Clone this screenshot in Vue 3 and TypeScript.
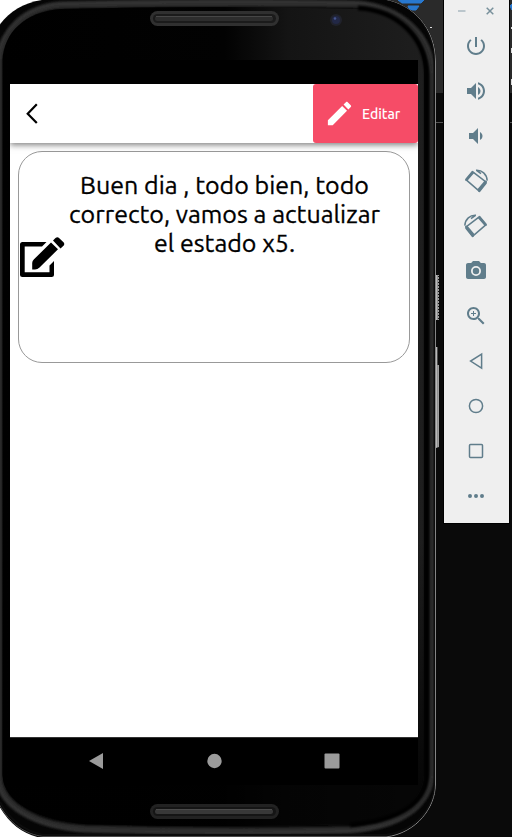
<script setup lang="ts">
interface Tool {
  name: string
  fill?: string
  stroke?: string
}

const statusLines: string[] = ['Buen dia , todo bien, todo', 'correcto, vamos a actualizar', 'el estado x5.']

const tools: Tool[] = [
  { name: 'power', fill: 'M13 3h-2v10h2V3zm4.83 2.17l-1.42 1.42C17.99 7.86 19 9.81 19 12c0 3.87-3.13 7-7 7s-7-3.13-7-7c0-2.19 1.01-4.14 2.58-5.42L6.17 5.17C4.23 6.82 3 9.26 3 12c0 4.97 4.03 9 9 9s9-4.03 9-9c0-2.74-1.23-5.18-3.17-6.83z' },
  { name: 'volume-up', fill: 'M3 9v6h4l5 5V4L7 9H3zm13.5 3c0-1.77-1.02-3.29-2.5-4.03v8.05c1.48-.73 2.5-2.25 2.5-4.02zM14 3.23v2.06c2.89.86 5 3.54 5 6.71s-2.11 5.85-5 6.71v2.06c4.01-.91 7-4.49 7-8.77s-2.99-7.86-7-8.77z' },
  { name: 'volume-down', fill: 'M18.5 12c0-1.77-1.02-3.29-2.5-4.03v8.05c1.48-.73 2.5-2.25 2.5-4.02zM5 9v6h4l5 5V4L9 9H5z' },
  { name: 'rotate-left', fill: 'M8.1 1.7 1.2 9.9v1.600l2 .5 7.200-8.300zM22.800 12.100l-2-.5-7.200 8.500.8 2.700 1.400.5 7-8.900z', stroke: 'M8.800 2.800 21.900 13 15.200 22.100 2.200 10.800ZM12 1.300C18 .9 22.800 5 23.200 11.600M12.500 1.300l4.500 3.300' },
  { name: 'rotate-right', fill: 'M15.900 1.700l6.900 8.200v1.600l-2 .5-7.200-8.300zM1.200 12.100l2-.5 7.200 8.500-.8 2.700-1.400.5-7-8.900z', stroke: 'M15.200 2.800 2.100 13 8.800 22.100 21.800 10.800ZM12 1.300C6 .9 1.200 5 .8 11.600M11.500 1.300 7 4.600' },
  { name: 'camera', fill: 'M12 8.8a3.2 3.2 0 1 0 0 6.4 3.2 3.2 0 0 0 0-6.4zM9 2 7.17 4H4c-1.1 0-2 .9-2 2v12c0 1.1.9 2 2 2h16c1.1 0 2-.9 2-2V6c0-1.1-.9-2-2-2h-3.17L15 2H9zm3 15a5 5 0 1 1 0-10 5 5 0 0 1 0 10z' },
  { name: 'zoom', fill: 'M15.5 14h-.79l-.28-.27C15.41 12.59 16 11.11 16 9.5 16 5.91 13.09 3 9.5 3S3 5.91 3 9.5 5.91 16 9.5 16c1.61 0 3.09-.59 4.23-1.57l.27.28v.79l5 4.99L20.49 19l-4.99-5zm-6 0C7.01 14 5 11.99 5 9.5S7.01 5 9.5 5 14 7.01 14 9.5 11.99 14 9.5 14zm2.5-4h-2v2H9v-2H7V9h2V7h1v2h2v1z' },
  { name: 'nav-back', stroke: 'M17.6 5.2v13.9L6.6 12.1Z' },
  { name: 'nav-home', stroke: 'M18.6 12A6.6 6.6 0 1 1 5.4 12 6.6 6.6 0 0 1 18.6 12' },
  { name: 'nav-overview', stroke: 'M6.5 5.5h11a1 1 0 0 1 1 1v11a1 1 0 0 1-1 1h-11a1 1 0 0 1-1-1v-11a1 1 0 0 1 1-1Z' },
  { name: 'more', fill: 'M8 12a2 2 0 1 1-4 0 2 2 0 0 1 4 0m6 0a2 2 0 1 1-4 0 2 2 0 0 1 4 0m6 0a2 2 0 1 1-4 0 2 2 0 0 1 4 0' },
]
</script>

<template>
  <main class="desktop">
    <svg class="scene" viewBox="0 0 512 837" aria-hidden="true">
      <defs>
        <linearGradient id="bezel" gradientUnits="userSpaceOnUse" x1="0" x2="424" y1="0" y2="0">
          <stop offset="0" stop-color="#000" />
          <stop offset=".53" stop-color="#020202" />
          <stop offset=".68" stop-color="#141414" />
          <stop offset="1" stop-color="#1e1e1e" />
        </linearGradient>
        <linearGradient id="fade" x1="0" x2="0" y1="0" y2="1">
          <stop offset=".65" stop-color="#000" stop-opacity="0" />
          <stop offset=".95" stop-color="#000" stop-opacity=".8" />
        </linearGradient>
        <linearGradient id="key" x1="0" x2="1" y1="0" y2="0">
          <stop offset="0" stop-color="#ddd" />
          <stop offset=".4" stop-color="#888" />
          <stop offset="1" stop-color="#aaa" />
        </linearGradient>
        <filter id="soft" filterUnits="userSpaceOnUse" x="-20" y="-20" width="480" height="880"><feGaussianBlur stdDeviation="1.200" /></filter>
        <clipPath id="phone-clip"><path d="M-2 27C10 10 26 1 50 -1L384 -1C413 4 436 28 436 61L436 785C436 807 417 834 386 838L42 838C24 835 9 824 -2 804Z" /></clipPath>
      </defs>
      <rect width="512" height="837" fill="#0a0a0a" />
      <rect x="390" width="122" height="93" fill="#2a2a2a" />
      <path d="M430 122.5h82" stroke="#555" />
      <path d="M398 0h26l-3 3h-19zM408 6h11l-3 4h-7zM510 6l2-2v6z" fill="#2878cf" stroke="#2878cf" />
      <path d="M430 27.5h2M511.5 27v2M511.5 48v5M511.5 79v6" stroke="#ddd" />
      <path d="M0 0h60v60H0zM0 780h60v57H0z" fill="#fff" />
      <g clip-path="url(#phone-clip)">
        <rect width="437" height="837" fill="#050505" />
        <g filter="url(#soft)">
          <path class="rim rim-wide" d="M-1 60C2 32 24 8 60 5Q218 1 358 4C400 8 431 34 432 75V770C430 806 401 826 350 830Q218 833 85 829C34 826 2 805 -1 780Z" />
          <path class="rim rim-mid" d="M1 60C3 32 25 10 60 7Q218 4 358 6C402 9 431 35 432 75V775C430 807 401 824 350 828Q218 831 85 828C34 824 4 804 1 780Z" />
        </g>
        <path d="M2.500 60C4 32 25 12 60 9Q218 5 358 9C397 12 424 38 424 72V775C423 802 398 819 350 824Q218 828 85 824C35 819 4 802 2.500 775Z" fill="url(#bezel)" />
        <path d="M2.500 60C4 32 25 12 60 9Q218 5 358 9C397 12 424 38 424 72V775C423 802 398 819 350 824Q218 828 85 824C35 819 4 802 2.500 775Z" fill="url(#fade)" />
        <path d="M358 8C398 10 426 38 427 75V775C426 804 399 820 350 825" fill="none" stroke="#000" stroke-width="5" filter="url(#soft)" />
        <path d="M386 -1C414 4 434 30 434.500 61V785C434 809 415 831 386 835H43C25 831 10 821 0 802" fill="none" stroke="#0c0c0c" stroke-width="2" />
        <path d="M384 -1C413 4 435.500 28 435.500 61V785C435.500 807 417 833 386 837" fill="none" stroke="#858585" stroke-width="1" />
        <path d="M-1 804C10 824 25 834 43 836.500H386" fill="none" stroke="#4a4a4a" stroke-width="1" />
      </g>
      <rect x="436" y="275" width="3" height="45" fill="url(#key)" />
      <path d="M438.500 276v43" stroke="#111" stroke-dasharray="1 2" />
      <path d="M436 347h1.500v18h1.500v82l-3 1z" fill="url(#key)" />
      <g>
        <rect x="150" y="11" width="129" height="15" rx="7.500" fill="#303030" />
        <rect x="153" y="14" width="123" height="9" rx="4.500" fill="#1b1b1b" />
        <rect x="155" y="16" width="118" height="5" rx="2.500" fill="#2d2d2d" />
        <path d="M156 16.500h116" stroke="#464646" />
        <rect x="150" y="804" width="129" height="15" rx="7.500" fill="#222" />
        <rect x="153" y="807" width="123" height="9" rx="4.500" fill="#151515" />
        <rect x="155" y="809" width="118" height="5" rx="2.500" fill="#383838" />
        <path d="M156 809.500h116" stroke="#4a4a4a" />
      </g>
      <circle cx="336" cy="20" r="6" fill="#20222b" />
      <circle cx="336" cy="20" r="4" fill="#222846" />
      <circle cx="335" cy="18.500" r="1.300" fill="#46558f" />
    </svg>

    <section class="screen">
      <div class="status-bar"></div>
      <div class="app">
        <header class="app-bar">
          <button class="back" aria-label="Volver">
            <svg viewBox="0 0 12 22"><path d="M10.800 1.300 1.700 10.700l9.100 9.300" /></svg>
          </button>
          <button class="edit">
            <svg viewBox="0 0 24 24"><path d="M3 17.250V21h3.750L17.810 9.940l-3.750-3.750L3 17.250zM20.710 7.040c.39-.39.39-1.020 0-1.410l-2.340-2.340c-.39-.39-1.020-.39-1.410 0l-1.830 1.830 3.750 3.750 1.830-1.830z" /></svg>
            <span>Editar</span>
          </button>
        </header>
        <article class="card">
          <svg class="compose" viewBox="0 0 46 41">
            <path d="M27.500 5 23 9.500H5.700V35.300H30.500V28.500L35 24V37.500Q35 40 32.500 40H3.500Q1 40 1 37.500V7.500Q1 5 3.500 5ZM32 5.500 39 12.300 20.500 30.500Q18.500 32.500 16 32.500H13.200V26Q13.200 24 15 22.300ZM34 3.500 36.500 1Q38.500-.5 40.300 1.200L44.500 5.300Q46 7 44.500 8.800L41.500 11.500Z" />
          </svg>
          <p class="message">
            <span v-for="line in statusLines" :key="line">{{ line }}</span>
          </p>
        </article>
      </div>
      <nav class="nav-bar">
        <svg viewBox="0 0 16 16"><path d="M15 0v16L1 8z" /></svg>
        <svg viewBox="0 0 16 16"><circle cx="8.500" cy="8" r="7.200" /></svg>
        <svg viewBox="0 0 16 16"><rect x=".5" y=".5" width="15" height="15" rx="1" /></svg>
      </nav>
    </section>

    <aside class="toolbar">
      <div class="window-controls">
        <svg viewBox="0 0 8 8"><path class="minimize" d="M0 4h7.500" /></svg>
        <svg viewBox="0 0 8 8"><path d="M.7.700 7.300 7.300M7.300.700.700 7.300" /></svg>
      </div>
      <div v-for="tool in tools" :key="tool.name" class="tool">
        <svg viewBox="0 0 24 24" :class="tool.name">
          <path v-if="tool.fill" class="solid" :d="tool.fill" />
          <path v-if="tool.stroke" class="outline" :d="tool.stroke" />
        </svg>
      </div>
    </aside>
  </main>
</template>

<style>
body { margin: 0; overflow: hidden; }
</style>

<style scoped>
* { box-sizing: border-box; }
.desktop {
  position: relative;
  display: flex;
  width: 512px;
  height: 837px;
  overflow: hidden;
  background: #0a0a0a;
  font-family: Ubuntu, "Noto Sans", sans-serif;
}
.scene { position: absolute; inset: 0; width: 512px; height: 837px; }
.rim { fill: none; }
.rim-wide { stroke: #333; stroke-width: 7; }
.rim-mid { stroke: #2c2c2c; stroke-width: 3; }
.screen {
  position: relative;
  display: flex;
  flex-direction: column;
  width: 408px;
  height: 725px;
  margin: 60px 26px 0 10px;
  background: #000;
}
.status-bar { height: 24px; }
.app { height: 653px; background: #fff; }
.app-bar {
  display: flex;
  align-items: stretch;
  justify-content: space-between;
  height: 59px;
  background: #fff;
  box-shadow: 0 2px 6px rgba(0, 0, 0, .5);
  clip-path: inset(0 0 -12px 0);
}
button { margin: 0; padding: 0; border: 0; background: none; font: inherit; }
.back { display: flex; align-items: center; padding-left: 16px; }
.back svg { width: 12px; height: 22px; fill: none; stroke: #000; stroke-width: 2.2; }
.edit {
  display: flex;
  align-items: center;
  gap: 7px;
  width: 105px;
  padding-left: 11px;
  border-radius: 3px;
  background: #f64c67;
  color: #fff;
  font-size: 14px;
  font-weight: 500;
}
.edit svg { width: 31px; height: 31px; fill: #fff; }
.card {
  display: flex;
  align-items: center;
  width: 392px;
  height: 212px;
  margin: 8px;
  border: 1px solid #999;
  border-radius: 24px;
}
.compose { flex: none; width: 46px; height: 41px; }
.message {
  display: flex;
  flex-direction: column;
  align-items: center;
  align-self: flex-start;
  width: 319px;
  margin: 19px 0 0;
  color: #000;
  font-size: 25px;
  line-height: 29px;
  white-space: nowrap;
  -webkit-text-stroke: .3px #000;
}
.nav-bar { display: flex; justify-content: center; gap: 102px; padding: 15px 1px 0 0; border-top: 1px solid #333; }
.nav-bar svg { width: 16px; height: 16px; fill: #9b9b9b; }
.toolbar { position: relative; flex: none; width: 65px; height: 523px; background: #efefef; box-shadow: 0 0 0 1px #000; }
.window-controls { display: flex; justify-content: space-between; height: 23px; padding: 7px 15px 0 14px; }
.window-controls svg { width: 8px; height: 8px; fill: none; stroke: #78909b; stroke-width: 1.500; }
.window-controls .minimize { stroke: #aab9c0; }
.tool { display: flex; align-items: center; height: 45px; padding-left: 20px; }
.tool svg { width: 24px; height: 24px; }
.solid { fill: #607d8b; }
.outline { fill: none; stroke: #607d8b; stroke-width: 1.500; }
</style>
